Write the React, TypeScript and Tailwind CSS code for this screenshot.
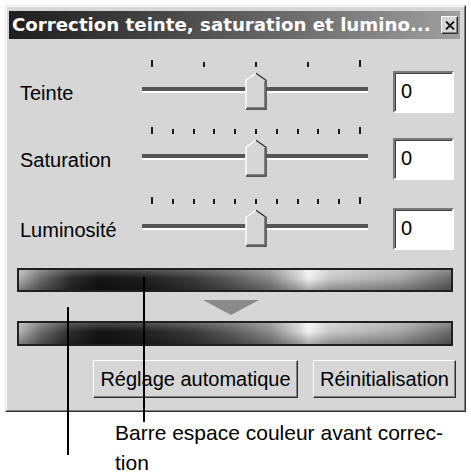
const barBg =
  "bg-[linear-gradient(to_bottom,rgba(255,255,255,0.22),rgba(255,255,255,0)_40%,rgba(0,0,0,0.3)),linear-gradient(to_right,#b4b4b4_0%,#6e6e6e_5%,#2c2c2c_12%,#141414_19%,#1e1e1e_28%,#3a3a3a_40%,#5c5c5c_49%,#8a8a8a_58%,#d4d4d4_65%,#f2f2f2_67%,#cacaca_72%,#a8a8a8_88%,#6a6a6a_100%)]";

const Thumb = () => (
  <svg width="22" height="38" viewBox="0 0 22 38" className="absolute left-[103px] top-[16px]">
    <polygon points="0.5,8 11,0.5 21.5,8 21.5,37.5 0.5,37.5" fill="#d6d6d6" />
    <polyline points="1,37 1,8.3 11,1.2" fill="none" stroke="#ffffff" strokeWidth="1.4" />
    <polyline points="11,1.2 21,8.3 21,37 1,37" fill="none" stroke="#303030" strokeWidth="1.4" />
    <polyline points="19.6,9 19.6,35.6 2,35.6" fill="none" stroke="#808080" strokeWidth="1.2" />
  </svg>
);

const Slider = (props: { ticks: number }) => (
  <div className="relative h-full w-[226px]">
    <div className="ml-[9px] mt-[4px] flex h-[7px] w-[210px] items-end justify-between">
      {Array.from({ length: props.ticks }, (_, i) => (
        <div
          key={i}
          className={`w-[2px] bg-[#1a1a1a] ${
            i === 0 || i === props.ticks - 1 ? "h-[7px]" : "h-[5px]"
          }`}
        />
      ))}
    </div>
    <div className="mt-[20px] h-[6px] border-b-2 border-b-white bg-[#555555]" />
    <Thumb />
  </div>
);

const Row = (props: { label: string; ticks: number; height: string }) => (
  <div className={`flex items-start ${props.height}`}>
    <div className="ml-[3px] mt-[25px] w-[122px] text-[20px] leading-[24px]">{props.label}</div>
    <Slider ticks={props.ticks} />
    <div className="ml-[25px] mt-[15px] flex h-[42px] w-[61px] items-center border-2 border-t-[#7a7a7a] border-l-[#7a7a7a] border-b-white border-r-white bg-white pb-[3px] pl-[6px] text-[20px] shadow-[inset_1px_1px_0_#404040]">
      0
    </div>
  </div>
);

const Button = (props: { label: string; width: string }) => (
  <button
    type="button"
    className={`flex h-[38px] items-center justify-center border border-t-white border-l-white border-b-[#303030] border-r-[#303030] bg-[#d6d6d6] text-[20px] shadow-[inset_-1px_-1px_0_#808080] ${props.width}`}
  >
    {props.label}
  </button>
);

export default function App() {
  return (
    <div
      className="relative h-[473px] w-[471px] overflow-hidden bg-white text-black"
      style={{ fontFamily: '"Liberation Sans", Arial, sans-serif' }}
    >
      <div className="ml-[5px] mt-[5px] h-[407px] w-[461px] border border-t-[#e4e4e4] border-l-[#e4e4e4] border-b-[#303030] border-r-[#303030] bg-[#d6d6d6]">
        <div className="h-full border border-t-white border-l-white border-b-[#808080] border-r-[#808080] px-[2px] pt-[2px]">
          {/* title bar */}
          <div className="mt-[2px] flex h-[28px] w-[451px] items-center justify-between bg-linear-to-r from-[#1e1e1e] to-[#a0a0a0] pl-[3px] pr-[2px]">
            <span
              className="whitespace-nowrap text-[18.2px] font-bold leading-none text-white"
              style={{ fontFamily: '"DejaVu Sans", Verdana, sans-serif' }}
            >
              Correction teinte, saturation et lumino...
            </span>
            <div className="flex h-[18px] w-[17px] shrink-0 items-center justify-center border border-t-white border-l-white border-b-[#303030] border-r-[#303030] bg-[#d6d6d6] shadow-[inset_-1px_-1px_0_#808080]">
              <svg width="10" height="9" viewBox="0 0 10 9">
                <path d="M1 0.5 L9 8.5 M9 0.5 L1 8.5" stroke="#111" strokeWidth="1.8" />
              </svg>
            </div>
          </div>

          {/* content */}
          <div className="pl-[8px] pt-[17px]">
            <Row label="Teinte" ticks={5} height="h-[67px]" />
            <Row label="Saturation" ticks={11} height="h-[70px]" />
            <Row label="Luminosité" ticks={11} height="h-[70px]" />

            <div className={`mt-[5px] h-[24px] w-[436px] border-2 border-[#202020] ${barBg}`} />
            <div className="ml-[186px] mt-[8px] h-[15px] w-[56px]">
              <svg width="56" height="15" viewBox="0 0 56 15">
                <polygon points="0,0 56,0 28,15" fill="#8a8a8a" />
              </svg>
            </div>
            <div className={`mt-[6px] h-[25px] w-[436px] border-2 border-[#202020] ${barBg}`} />

            <div className="mt-[14px] flex w-[439px] justify-end gap-[15px]">
              <Button label="Réglage automatique" width="w-[205px]" />
              <Button label="Réinitialisation" width="w-[143px]" />
            </div>
          </div>
        </div>
      </div>

      {/* callout */}
      <div className="ml-[115px] mt-[6px] text-[21px] leading-[30px]">
        <div>Barre espace couleur avant correc-</div>
        <div>tion</div>
      </div>
      <div className="absolute left-[143px] top-[277px] h-[145px] w-[2px] bg-black" />
      <div className="absolute left-[67px] top-[307px] h-[148px] w-[2px] bg-black" />
    </div>
  );
}
